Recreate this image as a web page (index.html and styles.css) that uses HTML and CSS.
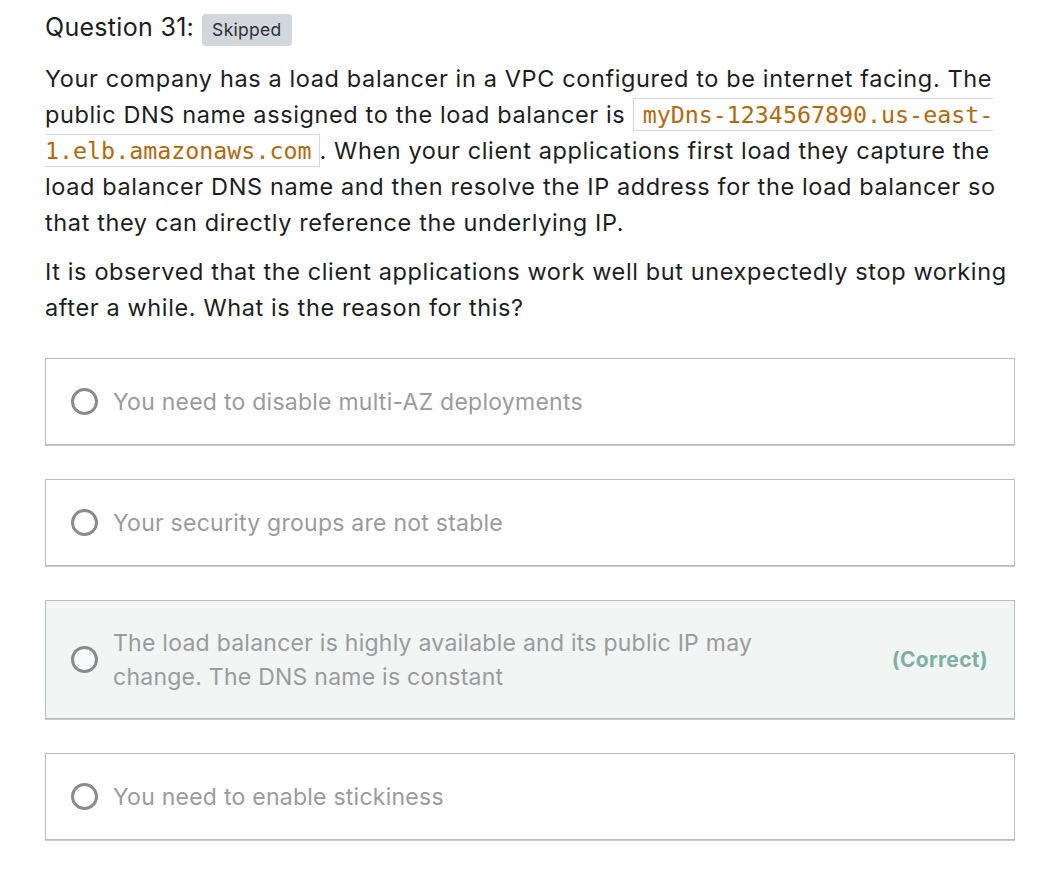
FILE: index.html
```html
<!DOCTYPE html>
<html>
<head>
<meta charset="utf-8">
<link rel="stylesheet" href="styles.css">
</head>
<body>
<div class="page">
  <div class="q-head">
    <span class="q-title">Question 31:</span>
    <span class="badge">Skipped</span>
  </div>
  <div class="prompt">
    <p>Your company has a load balancer in a VPC configured to be internet facing. The public DNS name assigned to the load balancer is <code>myDns-1234567890.us-east-1.elb.amazonaws.com</code>. When your client applications first load they capture the load balancer DNS name and then resolve the IP address for the load balancer so that they can directly reference the underlying IP.</p>
    <p>It is observed that the client applications work well but unexpectedly stop working after a while. What is the reason for this?</p>
  </div>
  <div class="options">
    <div class="option">
      <span class="radio"></span>
      <span class="opt-text">You need to disable multi-AZ deployments</span>
    </div>
    <div class="option">
      <span class="radio"></span>
      <span class="opt-text">Your security groups are not stable</span>
    </div>
    <div class="option correct">
      <span class="radio"></span>
      <span class="opt-text">The load balancer is highly available and its public IP may change. The DNS name is constant</span>
      <span class="tag">(Correct)</span>
    </div>
    <div class="option">
      <span class="radio"></span>
      <span class="opt-text">You need to enable stickiness</span>
    </div>
  </div>
</div>
</body>
</html>
```
FILE: styles.css
```css
html, body {
  margin: 0;
  padding: 0;
  background: #ffffff;
}
body {
  font-family: Inter, "Noto Sans", sans-serif;
  color: #1c1d1f;
}
.page {
  padding: 11px 36px 30px 45px;
}
.q-head {
  display: flex;
  align-items: baseline;
  gap: 8px;
}
.q-title {
  font-size: 25px;
  line-height: 32px;
  letter-spacing: 0.3px;
}
.badge {
  background: #d1d7dc;
  color: #2d2f31;
  font-size: 17.5px;
  letter-spacing: 0.3px;
  border-radius: 4px;
  padding: 5px 10px;
  line-height: 22px;
}
.prompt {
  margin-top: 15px;
  font-size: 23.5px;
  letter-spacing: 0.62px;
  line-height: 36px;
}
.prompt p {
  margin: 0 0 13px 0;
}
code {
  font-family: "DejaVu Sans Mono", monospace;
  font-size: 23.3px;
  letter-spacing: 0;
  color: #b4690e;
  border: 1px solid #d1d7dc;
  padding: 2px 7px 2px 9px;
}
.options {
  margin-top: 32px;
  display: flex;
  flex-direction: column;
  gap: 34px;
  width: 970px;
}
.option {
  display: flex;
  align-items: center;
  min-height: 87px;
  border: 1px solid #bcbcbc;
  box-shadow: 0 1px 0 #c8c8c8;
  padding: 0 26px 0 25px;
  box-sizing: border-box;
}
.option.correct {
  background: #f1f5f4;
  min-height: 119px;
}
.radio {
  flex: none;
  width: 21px;
  height: 21px;
  border: 3px solid #8a8b8c;
  border-radius: 50%;
  margin-right: 15px;
  background: #fff;
}
.correct .radio {
  background: #f7f9fa;
}
.opt-text {
  flex: 1;
  font-size: 23px;
  letter-spacing: 0.25px;
  line-height: 34px;
  color: #9a9b9c;
  max-width: 680px;
}
.tag {
  margin-left: auto;
  font-size: 21px;
  letter-spacing: 0.3px;
  font-weight: 700;
  color: #7fb0a3;
}
```
